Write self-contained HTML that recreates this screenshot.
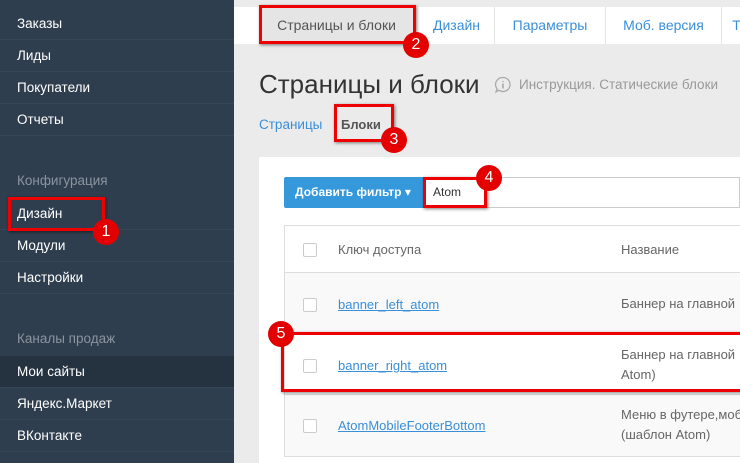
<!DOCTYPE html><html><head><meta charset="utf-8"><style>
*{margin:0;padding:0;box-sizing:border-box}
body{width:740px;height:463px;overflow:hidden;background:#ebebeb;font-family:"Liberation Sans","DejaVu Sans",sans-serif;position:relative}
.sb{position:absolute;left:0;top:0;width:234px;height:463px;background:#2f3e4e}
.it{position:absolute;left:0;width:234px;height:32px;line-height:32px;padding-left:17px;color:#fff;font-size:13.5px;border-bottom:1px solid #364657}
.gr{color:#8a949e;border:none}
.a{position:absolute;border:3px solid #e00;box-shadow:1px 1px 3px rgba(0,0,0,.5)}
.c{position:absolute;width:26px;height:26px;border-radius:50%;background:#e30000;color:#fff;font-size:16px;text-align:center;line-height:26px}
.tab{position:absolute;top:7px;height:37px;line-height:37px;background:#fff;color:#3a8fd9;font-size:14px;text-align:center;border-right:1px solid #e5e5e5}
.row{position:absolute;left:284px;width:456px;border-left:1px solid #ddd;border-bottom:1px solid #ddd;font-size:13px;overflow:hidden}
.cb{position:absolute;left:18px;width:14px;height:14px;border:1px solid #ccc;border-radius:2px;background:#fff}
.k{position:absolute;left:53px;color:#3a8fd9;text-decoration:underline}
.n{position:absolute;left:336px;color:#666;line-height:20px;white-space:nowrap}
</style></head><body>
<div class="sb">
<div class="it" style="top:8px">Заказы</div>
<div class="it" style="top:40px">Лиды</div>
<div class="it" style="top:72px">Покупатели</div>
<div class="it" style="top:104px">Отчеты</div>
<div class="it gr" style="top:165px">Конфигурация</div>
<div class="it" style="top:198px">Дизайн</div>
<div class="it" style="top:230px">Модули</div>
<div class="it" style="top:262px">Настройки</div>
<div class="it gr" style="top:323px">Каналы продаж</div>
<div class="it" style="top:356px;background:#253341">Мои сайты</div>
<div class="it" style="top:388px">Яндекс.Маркет</div>
<div class="it" style="top:420px">ВКонтакте</div>
</div>
<div style="position:absolute;left:234px;top:7px;width:506px;height:37px;background:#fff"></div>
<div class="tab" style="left:259px;width:156px;background:#e5e5e5;color:#555">Страницы и блоки</div>
<div class="tab" style="left:419px;width:76px">Дизайн</div>
<div class="tab" style="left:495px;width:111px">Параметры</div>
<div class="tab" style="left:606px;width:116px">Моб. версия</div>
<div class="tab" style="left:722px;width:30px">Т</div>
<div style="position:absolute;left:259px;top:69px;font-size:26px;color:#333">Страницы и блоки</div>
<svg style="position:absolute;left:494px;top:76px" width="18" height="18" viewBox="0 0 18 18"><path d="M9 1.5a7 7 0 1 1-4 12.7L2 16l1-3.3A7 7 0 0 1 9 1.5z" fill="none" stroke="#aaa" stroke-width="1.3"/><path d="M9 7.5v5M9 5v1" stroke="#aaa" stroke-width="1.6"/></svg>
<div style="position:absolute;left:519px;top:77px;font-size:13.5px;color:#999">Инструкция. Статические блоки</div>
<div style="position:absolute;left:259px;top:117px;font-size:13.5px;color:#3a8fd9">Страницы</div>
<div style="position:absolute;left:341px;top:117px;font-size:13px;color:#555;font-weight:bold">Блоки</div>
<div style="position:absolute;left:259px;top:157px;width:481px;height:306px;background:#fff"></div>
<div style="position:absolute;left:284px;top:177px;width:140px;height:31px;background:#3498db;border-radius:2px 0 0 2px;color:#fff;font-size:12px;font-weight:bold;line-height:31px;padding-left:11px">Добавить фильтр ▾</div>
<div style="position:absolute;left:424px;top:177px;width:316px;height:31px;border:1px solid #ccc;font-size:12px;line-height:29px;padding-left:8px;color:#333">Atom</div>
<div class="row" style="top:225px;height:48px;border-top:1px solid #ddd;background:#fff"><div class="cb" style="top:17px"></div><div style="position:absolute;left:53px;top:16px;color:#666">Ключ доступа</div><div class="n" style="top:14px">Название</div></div>
<div class="row" style="top:273px;height:62px;background:#f9f9f9"><div class="cb" style="top:25px"></div><div class="k" style="top:24px">banner_left_atom</div><div class="n" style="top:21px">Баннер на главной</div></div>
<div class="row" style="top:335px;height:60px;background:#fff"><div class="cb" style="top:24px"></div><div class="k" style="top:23px">banner_right_atom</div><div class="n" style="top:10px">Баннер на главной<br>Atom)</div></div>
<div class="row" style="top:395px;height:62px;background:#f9f9f9"><div class="cb" style="top:24px"></div><div class="k" style="top:23px">AtomMobileFooterBottom</div><div class="n" style="top:10px">Меню в футере,моб<br>(шаблон Atom)</div></div>
<div class="a" style="left:8px;top:197px;width:97px;height:34px"></div><div class="c" style="left:93px;top:219px">1</div>
<div class="a" style="left:259px;top:5px;width:157px;height:39px"></div><div class="c" style="left:403px;top:32px">2</div>
<div class="a" style="left:334px;top:104px;width:60px;height:38px"></div><div class="c" style="left:381px;top:127px">3</div>
<div class="a" style="left:423px;top:177px;width:64px;height:31px"></div><div class="c" style="left:476px;top:165px">4</div>
<div class="a" style="left:281px;top:332px;width:462px;height:60px"></div><div class="c" style="left:268px;top:321px">5</div>
</body></html>
